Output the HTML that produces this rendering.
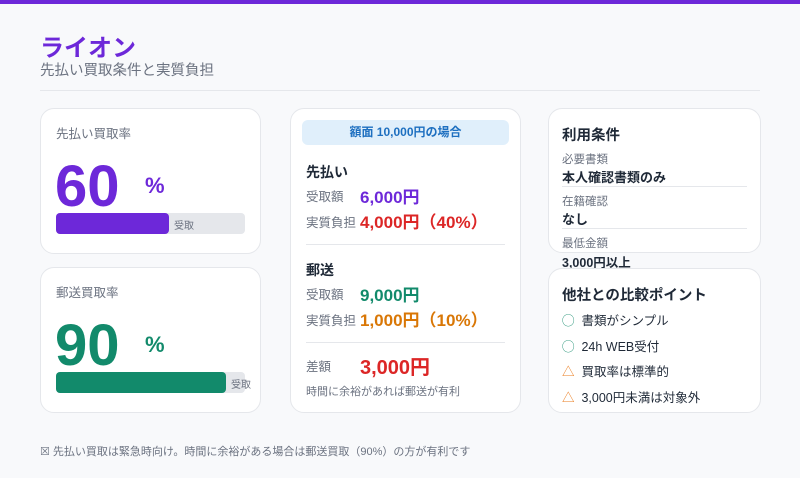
<!DOCTYPE html>
<html><head><meta charset="utf-8"><style>
*{margin:0;padding:0;box-sizing:border-box}
body{width:800px;height:478px;background:#f8f9fb;font-family:"Liberation Sans","Noto Sans CJK JP",sans-serif;position:relative;overflow:hidden;color:#1f2937}
.top{position:absolute;left:0;top:0;width:800px;height:4px;background:#6d28d9}
.card{position:absolute;background:#fff;border:1px solid #e5e7eb;border-radius:14px}
.abs{position:absolute;white-space:nowrap}
.lbl{font-size:12.5px;color:#6b7280}
</style></head><body>
<div class="top"></div>
<div class="abs" style="left:40px;top:33px;font-size:24px;font-weight:bold;color:#6d28d9;line-height:32px">ライオン</div>
<div class="abs" style="left:40px;top:61px;font-size:14.5px;color:#6b7280;line-height:20px">先払い買取条件と実質負担</div>
<div class="abs" style="left:40px;top:90px;width:720px;height:1px;background:#e5e7eb"></div>

<div class="card" style="left:40px;top:108px;width:221px;height:146px">
<div class="abs lbl" style="left:15px;top:14px">先払い買取率</div>
<div class="abs" style="left:14px;top:44px;font-size:58px;font-weight:bold;color:#6d28d9;line-height:68px">60</div>
<div class="abs" style="left:104px;top:64px;font-size:22px;font-weight:bold;color:#6d28d9">%</div>
<div class="abs" style="left:15px;top:104px;width:189px;height:21px;background:#e5e7eb;border-radius:4px"></div>
<div class="abs" style="left:15px;top:104px;width:113px;height:21px;background:#6d28d9;border-radius:4px"></div>
<div class="abs" style="left:133px;top:108px;font-size:10px;color:#6b7280">受取</div>
</div>

<div class="card" style="left:40px;top:267px;width:221px;height:146px">
<div class="abs lbl" style="left:15px;top:14px">郵送買取率</div>
<div class="abs" style="left:14px;top:44px;font-size:58px;font-weight:bold;color:#128a6b;line-height:68px">90</div>
<div class="abs" style="left:104px;top:64px;font-size:22px;font-weight:bold;color:#128a6b">%</div>
<div class="abs" style="left:15px;top:104px;width:189px;height:21px;background:#e5e7eb;border-radius:4px"></div>
<div class="abs" style="left:15px;top:104px;width:170px;height:21px;background:#128a6b;border-radius:4px"></div>
<div class="abs" style="left:190px;top:108px;font-size:10px;color:#6b7280">受取</div>
</div>

<div class="card" style="left:290px;top:108px;width:231px;height:305px">
<div class="abs" style="left:11px;top:11px;width:207px;height:25px;background:#e0effb;border-radius:6px;text-align:center;font-size:12px;font-weight:bold;color:#1d6fc0;line-height:25px">額面 10,000円の場合</div>
<div class="abs" style="left:15px;top:53px;font-size:14px;font-weight:bold">先払い</div>
<div class="abs lbl" style="left:15px;top:77px">受取額</div>
<div class="abs" style="left:69px;top:74px;font-size:17px;font-weight:bold;color:#6d28d9">6,000円</div>
<div class="abs lbl" style="left:15px;top:103px">実質負担</div>
<div class="abs" style="left:69px;top:99px;font-size:17px;font-weight:bold;color:#dc2626">4,000円（40%）</div>
<div class="abs" style="left:15px;top:135px;width:199px;height:1px;background:#e5e7eb"></div>
<div class="abs" style="left:15px;top:151px;font-size:14px;font-weight:bold">郵送</div>
<div class="abs lbl" style="left:15px;top:175px">受取額</div>
<div class="abs" style="left:69px;top:172px;font-size:17px;font-weight:bold;color:#128a6b">9,000円</div>
<div class="abs lbl" style="left:15px;top:201px">実質負担</div>
<div class="abs" style="left:69px;top:197px;font-size:17px;font-weight:bold;color:#d97706">1,000円（10%）</div>
<div class="abs" style="left:15px;top:233px;width:199px;height:1px;background:#e5e7eb"></div>
<div class="abs lbl" style="left:15px;top:247px">差額</div>
<div class="abs" style="left:69px;top:242px;font-size:20px;font-weight:bold;color:#dc2626">3,000円</div>
<div class="abs" style="left:15px;top:274px;font-size:11px;color:#6b7280">時間に余裕があれば郵送が有利</div>
</div>

<div class="card" style="left:548px;top:108px;width:213px;height:145px">
<div class="abs" style="left:13px;top:15px;font-size:14.5px;font-weight:bold">利用条件</div>
<div class="abs" style="left:13px;top:42px;font-size:11.5px;color:#6b7280">必要書類</div>
<div class="abs" style="left:13px;top:58px;font-size:13px;font-weight:bold">本人確認書類のみ</div>
<div class="abs" style="left:13px;top:77px;width:185px;height:1px;background:#e5e7eb"></div>
<div class="abs" style="left:13px;top:84px;font-size:11.5px;color:#6b7280">在籍確認</div>
<div class="abs" style="left:13px;top:100px;font-size:13px;font-weight:bold">なし</div>
<div class="abs" style="left:13px;top:119px;width:185px;height:1px;background:#e5e7eb"></div>
<div class="abs" style="left:13px;top:126px;font-size:11.5px;color:#6b7280">最低金額</div>
<div class="abs" style="left:13px;top:143px;font-size:12.5px;font-weight:bold">3,000円以上</div>
</div>

<div class="card" style="left:548px;top:268px;width:213px;height:145px">
<div class="abs" style="left:13px;top:15px;font-size:14.5px;font-weight:bold">他社との比較ポイント</div>
<div class="abs" style="left:13px;top:41px;font-size:12.5px"><span style="color:#128a6b">◯</span>&nbsp; 書類がシンプル</div>
<div class="abs" style="left:13px;top:67px;font-size:12.5px"><span style="color:#128a6b">◯</span>&nbsp; 24h WEB受付</div>
<div class="abs" style="left:13px;top:92px;font-size:12.5px"><span style="color:#ea7b1c">△</span>&nbsp; 買取率は標準的</div>
<div class="abs" style="left:13px;top:118px;font-size:12.5px"><span style="color:#ea7b1c">△</span>&nbsp; 3,000円未満は対象外</div>
</div>

<div class="abs" style="left:40px;top:443px;font-size:11px;color:#6b7280">☒ 先払い買取は緊急時向け。時間に余裕がある場合は郵送買取（90%）の方が有利です</div>
</body></html>
